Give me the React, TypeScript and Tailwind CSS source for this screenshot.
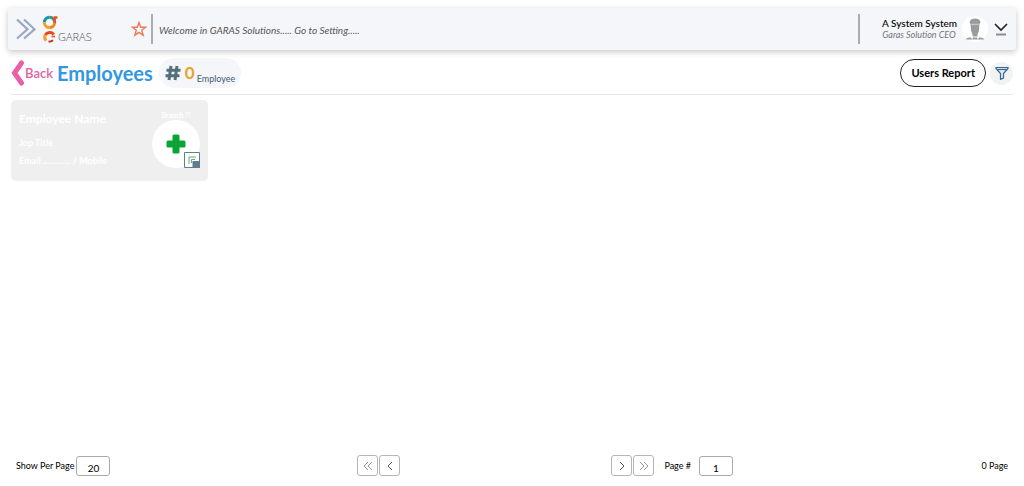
import { ReactNode } from "react";

interface PagerButtonProps {
  label: string;
  path: string;
  color: string;
}

const PagerButton = ({ label, path, color }: PagerButtonProps) => (
  <button
    aria-label={label}
    className="flex justify-center items-center w-[21px] h-[21px] bg-white rounded-[3px] border border-[#b5b5b5]"
  >
    <svg viewBox="0 0 12 12" className={`w-3 h-3 ${color}`} fill="none" stroke="currentColor">
      <path d={path} />
    </svg>
  </button>
);

const Logo = () => (
  <a href="#" aria-label="Garas home" className="flex items-end w-12 h-7">
    <svg viewBox="0 0 16 28" className="w-4 h-7 shrink-0" fill="none" strokeWidth="3">
      <path d="M7.500 2.200A5.200 5.200 0 0 0 2.300 7.500" stroke="#1597a8" />
      <path d="M2.300 7.500A5.200 5.200 0 0 0 7.500 12.500" stroke="#f0a21d" />
      <path d="M7.500 12.500A5.200 5.200 0 0 0 12.700 7.500" stroke="#f0861d" />
      <path d="M12.700 7.500A5.200 5.200 0 0 0 7.500 2.200" stroke="#3a8f8c" />
      <path d="M12.700 8V2.500H15.500" stroke="#e8541e" strokeWidth="2.400" />
      <path d="M11.800 19.500C9.500 16.700 5 17 3.300 20" stroke="#e8481c" />
      <path d="M3.300 20c-1 2-.5 4.200.9 5.500" stroke="#f4a024" />
      <path d="M6.500 26.500c1.800.3 3.200-.2 4.500-1.300" stroke="#c5361c" strokeWidth="1.800" />
      <path d="M9.500 21.500h3.500" stroke="#e8641e" strokeWidth="1.800" />
    </svg>
    <span className="font-['Open_Sans'] text-[11px] leading-3 font-light text-[#555]">GARAS</span>
  </a>
);

const Avatar = () => (
  <svg viewBox="0 0 26 26" className="w-[26px] h-[26px] shrink-0" fill="#999b9d">
    <circle cx="13" cy="13" r="13" fill="#fff" />
    <path d="M7.500 6C8 3.500 10.500 2.500 13 2.500S18 3.500 18.500 6l-1 2h-9z" />
    <path d="M8.500 7.500h9l-.5 6.500c-.3 2-1.200 3.500-2 4.500h-4c-.8-1-1.700-2.500-2-4.500z" />
    <path d="M10.500 17h5v3.500h-5zM4 23.500c0-.8.600-1.300 1.500-1.500l3-.8 2 2.300zM22 23.500c0-.8-.6-1.300-1.500-1.500l-3-.8-2 2.300zM11 21.500h4l.8 2h-5.600z" />
    <path d="M9.500 8.300h7" stroke="#fff" strokeWidth=".6" fill="none" />
  </svg>
);

const Header = () => (
  <header className="flex items-center px-2 h-[42px] bg-[#f4f6fa] rounded-[3px] shadow-[0_2px_6px_rgba(0,0,0,0.22)]">
    <button aria-label="Open menu" className="mr-1.5">
      <svg viewBox="0 0 20 24" className="w-5 h-6" fill="none" stroke="#9aa7c2" strokeWidth="2.200">
        <path d="M1 2.500l10.500 9.800L1 21.500M8 2.500l10.500 9.800L8 21.500" />
      </svg>
    </button>
    <Logo />
    <button aria-label="Favourite" className="ml-[41px]">
      <svg viewBox="0 0 16 16" className="w-4 h-4" fill="none" stroke="#ee7959" strokeWidth="1.400">
        <path d="M8 1.500l1.700 4.700h5l-4 3 1.500 5L8 11.300l-4.200 2.900 1.500-5-4-3h5z" />
      </svg>
    </button>
    <div className="ml-1 w-0.5 h-[30px] bg-[#a9adb3]" />
    <p className="ml-1.5 pt-0.5 text-[10px] leading-4 italic text-[#555]">
      Welcome in GARAS Solutions..... Go to Setting.....
    </p>
    <div className="ml-auto w-0.5 h-[30px] bg-[#a9adb3]" />
    <div className="ml-[22px] mr-1.5 w-[74px] text-center whitespace-nowrap">
      <p className="text-[10px] leading-3 font-medium text-black">A System System</p>
      <p className="text-[9px] leading-3 italic text-[#777]">Garas Solution CEO</p>
    </div>
    <Avatar />
    <button aria-label="Account menu" className="ml-1.5">
      <svg viewBox="0 0 14 14" className="w-3.5 h-3.5" fill="none">
        <path d="M1 2l6 6 6-6" stroke="#222" strokeWidth="1.600" />
        <path d="M2 12.500h10" stroke="#8c8f92" strokeWidth="2" />
      </svg>
    </button>
  </header>
);

const TitleBar = () => (
  <div className="flex items-center mx-[3px] pt-2 pb-1.5 border-b border-[#e8e8e8]">
    <a href="#" className="flex items-center text-[13px] leading-5 font-semibold text-[#e0629f]">
      <svg viewBox="0 0 14 26" className="w-3.5 h-[26px]" fill="none" stroke="#ea5fa5" strokeWidth="5">
        <path d="M10.500 3L3.500 13l7 10" strokeLinecap="round" strokeLinejoin="miter" />
      </svg>
      Back
    </a>
    <h1 className="ml-1 text-[20px] leading-6 font-bold text-[#3397e2]">Employees</h1>
    <div className="flex items-center ml-1.5 px-1.5 h-[30px] bg-[#f4f6fa] rounded-full">
      <svg viewBox="0 0 16 16" className="w-4 h-4" fill="none" stroke="#546e7a" strokeWidth="3">
        <path d="M6 1L4 15M12 1l-2 14M1.500 5.300h14M.5 10.700h14" />
      </svg>
      <span className="ml-1 text-[17px] leading-5 font-bold text-[#e5a42c]">0</span>
      <span className="ml-0.5 pt-3 text-[9px] leading-3 text-[#3f6075]">Employee</span>
    </div>
    <button className="ml-auto px-2.5 h-7 text-[11px] leading-4 font-bold text-black bg-white rounded-full border border-[#222]">
      Users Report
    </button>
    <button aria-label="Filter" className="flex justify-center items-center ml-1 w-[23px] h-[23px] bg-[#f0f2f4] rounded-full">
      <svg viewBox="0 0 14 14" className="w-3.5 h-3.5" fill="#dceaf3" stroke="#37688c" strokeWidth="1.200">
        <path d="M1 1.500h12v1L8.500 7.500V12l-3 1.300V7.500L1 2.500z" />
        <path d="M2 3.500h10" />
      </svg>
    </button>
  </div>
);

const EmployeeCard = () => (
  <article className="flex justify-between mx-[3px] mt-[5px] px-2 w-[197px] h-[81px] text-white bg-[#efefef] rounded-[5px]">
    <div className="pt-[11px] font-bold whitespace-nowrap">
      <h2 className="text-[12px] leading-4">Employee Name</h2>
      <p className="mt-2.5 text-[9px] leading-3">Jop Title</p>
      <p className="mt-1.5 text-[9px] leading-3">Email ............. / Mobile</p>
    </div>
    <div className="flex flex-col items-center pt-2.5">
      <p className="text-[7px] leading-[10px] font-bold">Branch ?!</p>
      <button aria-label="Add employee" className="flex relative justify-center items-center w-12 h-12 bg-white rounded-full">
        <svg viewBox="0 0 20 20" className="w-5 h-5" fill="#0ba336">
          <path d="M8 .5h4q1.500 0 1.500 1.500v4.500H18q1.500 0 1.500 1.500v4q0 1.500-1.500 1.500h-4.500V18q0 1.500-1.500 1.500H8q-1.500 0-1.500-1.500v-4.500H2Q.5 13.500.5 12V8Q.5 6.500 2 6.500h4.500V2Q6.500.5 8 .5z" />
        </svg>
        <svg viewBox="0 0 16 16" className="absolute right-0 bottom-0 w-4 h-4">
          <path d="M.5.5h15v15H.5z" fill="#fff" stroke="#607d8b" />
          <path d="M5 12V5h7M7.500 11V7.500H11" fill="none" stroke="#67ad6d" />
          <path d="M8.500 9H16v7H10l-1.500-1.500z" fill="#607d8b" />
        </svg>
      </button>
    </div>
  </article>
);

interface PageInputProps {
  id: string;
  value: string;
  children: ReactNode;
}

const PageInput = ({ id, value, children }: PageInputProps) => (
  <>
    <label htmlFor={id}>{children}</label>
    <input
      id={id}
      defaultValue={value}
      className="pt-1 w-[34px] h-5 text-[10px] text-center bg-white rounded-[3px] border border-[#aaa]"
    />
  </>
);

const Footer = () => (
  <footer className="grid grid-cols-[342fr_255fr_371fr_24fr] items-center px-2 mt-auto text-[9px] leading-3 font-normal text-black whitespace-nowrap">
    <div className="flex gap-0.5 items-center">
      <PageInput id="per-page" value="20">Show Per Page</PageInput>
    </div>
    <div className="flex gap-px items-center">
      <PagerButton label="First page" color="text-[#999]" path="M6 2L2 6l4 4M10 2L6 6l4 4" />
      <PagerButton label="Previous page" color="text-[#555]" path="M8 2L4 6l4 4" />
    </div>
    <div className="flex items-center">
      <div className="flex gap-px">
        <PagerButton label="Next page" color="text-[#555]" path="M4 2l4 4-4 4" />
        <PagerButton label="Last page" color="text-[#999]" path="M2 2l4 4-4 4M6 2l4 4-4 4" />
      </div>
      <div className="flex gap-2 items-center ml-2.5">
        <PageInput id="page-number" value="1">Page #</PageInput>
      </div>
    </div>
    <p className="text-right">0 Page</p>
  </footer>
);

const App = () => (
  <div className="flex flex-col px-2 pt-2 pb-2.5 min-h-screen font-['Lato',sans-serif] bg-white">
    <Header />
    <main>
      <TitleBar />
      <EmployeeCard />
    </main>
    <Footer />
  </div>
);

export default App;
